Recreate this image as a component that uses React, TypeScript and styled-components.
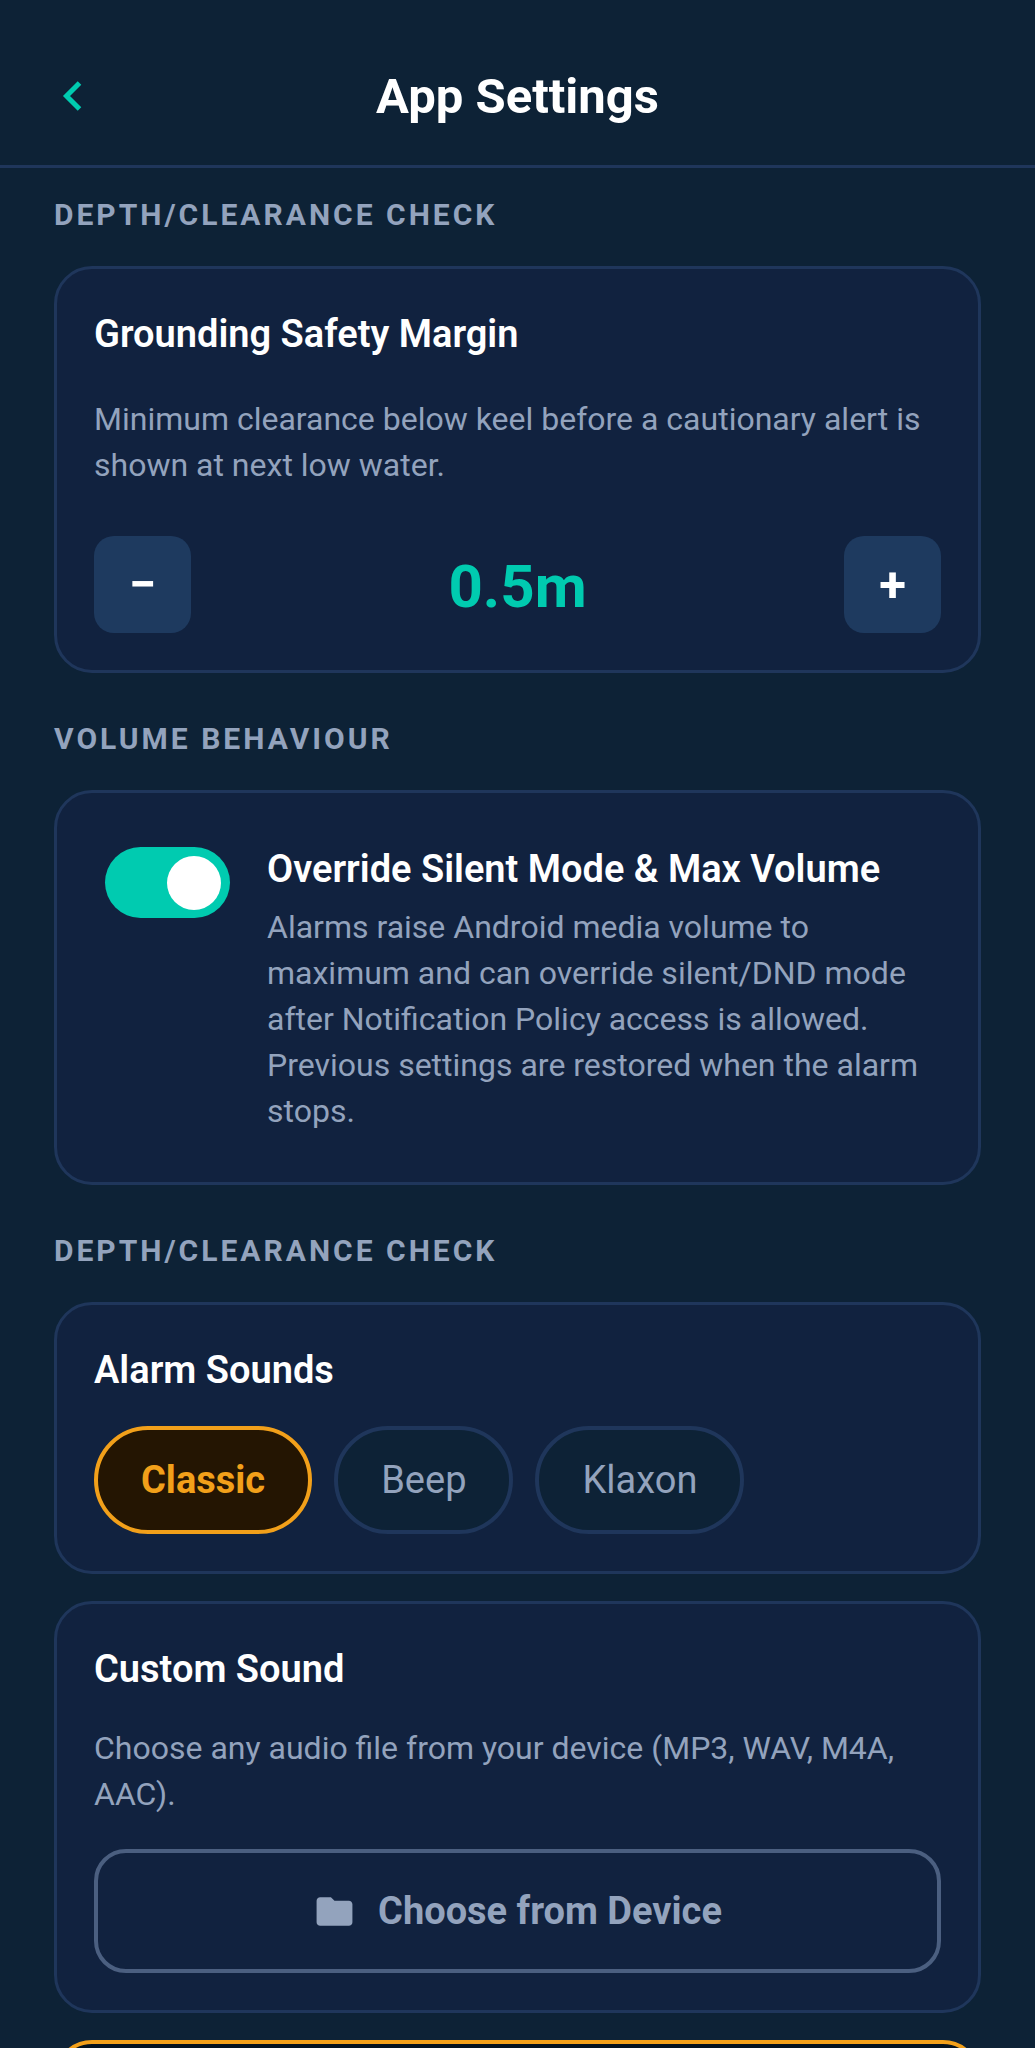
import React, { useState } from 'react';
import styled, { createGlobalStyle } from 'styled-components';

const color = {
  page: '#0d2236',
  card: '#11223f',
  line: '#1f365b',
  control: '#1e3a5f',
  muted: '#93a3bd',
  accent: '#00cbb0',
  amber: '#f2a01a',
};

const GlobalStyle = createGlobalStyle`
  * { box-sizing: border-box; }
  body {
    margin: 0;
    background: ${color.page};
    color: #ffffff;
    font-family: Roboto, 'Noto Sans', sans-serif;
  }
  button { font-family: inherit; cursor: pointer; }
`;

const Screen = styled.div`
  height: 100vh;
  overflow: hidden;
  background: ${color.page};
`;

const Header = styled.header`
  display: grid;
  grid-template-columns: 64px 1fr 64px;
  align-items: start;
  padding: 64px 40px 35px;
  border-bottom: 3px solid ${color.line};
`;

const BackButton = styled.button`
  display: flex;
  align-items: center;
  justify-content: center;
  height: 64px;
  padding: 0;
  border: 0;
  background: none;
  color: ${color.accent};
`;

const PageTitle = styled.h1`
  margin: 0;
  font-size: 49px;
  line-height: 66px;
  font-weight: 700;
  text-align: center;
`;

const Content = styled.main`
  display: flex;
  flex-direction: column;
  gap: 48px;
  padding: 29px 54px 0;
`;

const Section = styled.section`
  display: flex;
  flex-direction: column;
  gap: 27px;
`;

const SectionLabel = styled.h2`
  margin: 0 0 6px;
  color: ${color.muted};
  font-size: 30px;
  line-height: 36px;
  font-weight: 700;
  letter-spacing: 3px;
`;

const Card = styled.div`
  padding: 37px;
  border: 3px solid ${color.line};
  border-radius: 38px;
  background: ${color.card};
`;

const HighlightCard = styled.div`
  height: 240px;
  border: 4px solid ${color.amber};
  border-radius: 38px;
  background: #03121f;
`;

const CardTitle = styled.h3`
  margin: 0;
  font-size: 38px;
  line-height: 56px;
  font-weight: 600;
`;

const Description = styled.p<{ $above: number }>`
  margin: ${(p) => p.$above}px 0 0;
  color: ${color.muted};
  font-size: 32px;
  line-height: 46px;
`;

const Stepper = styled.div`
  display: flex;
  align-items: center;
  justify-content: space-between;
  margin-top: 48px;
`;

const StepButton = styled.button`
  width: 97px;
  height: 97px;
  padding: 0;
  border: 0;
  border-radius: 20px;
  background: ${color.control};
  color: #ffffff;
  font-size: 49px;
  line-height: 56px;
  font-weight: 700;
`;

const StepValue = styled.output`
  padding-top: 5px;
  color: ${color.accent};
  font-size: 60px;
  line-height: 72px;
  font-weight: 700;
`;

const SwitchRow = styled.div`
  display: flex;
  align-items: flex-start;
  gap: 37px;
  padding: 11px;
`;

const Switch = styled.input`
  appearance: none;
  flex: none;
  display: flex;
  align-items: center;
  width: 125px;
  height: 71px;
  margin: 6px 0 0;
  padding: 0 9px;
  border-radius: 36px;
  background: ${color.control};
  cursor: pointer;

  &::before {
    content: '';
    width: 54px;
    height: 54px;
    border-radius: 50%;
    background: #ffffff;
  }

  &:checked {
    justify-content: flex-end;
    background: ${color.accent};
  }
`;

const SwitchText = styled.div`
  flex: 1;
  min-width: 0;
`;

const Pills = styled.div`
  display: flex;
  flex-wrap: wrap;
  gap: 22px;
  margin-top: 28px;
`;

const Pill = styled.button<{ $active: boolean }>`
  height: 108px;
  padding: 0 43px;
  border: 4px solid ${(p) => (p.$active ? color.amber : color.line)};
  border-radius: 54px;
  background: ${(p) => (p.$active ? '#241502' : color.page)};
  color: ${(p) => (p.$active ? color.amber : color.muted)};
  font-size: 38px;
  line-height: 46px;
  font-weight: ${(p) => (p.$active ? 700 : 400)};
`;

const OutlineButton = styled.button`
  display: flex;
  align-items: center;
  justify-content: center;
  gap: 22px;
  width: 100%;
  height: 124px;
  margin-top: 32px;
  padding: 0;
  border: 4px solid #4b5f80;
  border-radius: 32px;
  background: transparent;
  color: ${color.muted};
  font-size: 38px;
  line-height: 46px;
  font-weight: 700;
`;

const sounds = ['Classic', 'Beep', 'Klaxon'];

export default function App() {
  const [margin, setMargin] = useState(5);
  const [override, setOverride] = useState(true);
  const [sound, setSound] = useState('Classic');

  return (
    <>
      <GlobalStyle />
      <Screen>
        <Header>
          <BackButton aria-label="Back">
            <svg width="20" height="30" viewBox="0 0 20 30" fill="none">
              <path d="M17.5 2 4.5 15l13 13" stroke="currentColor" strokeWidth="5" />
            </svg>
          </BackButton>
          <PageTitle>App Settings</PageTitle>
        </Header>
        <Content>
          <Section>
            <SectionLabel>DEPTH/CLEARANCE CHECK</SectionLabel>
            <Card>
              <CardTitle>Grounding Safety Margin</CardTitle>
              <Description $above={34}>
                Minimum clearance below keel before a cautionary alert is shown at next low water.
              </Description>
              <Stepper>
                <StepButton aria-label="Decrease margin" onClick={() => setMargin(Math.max(0, margin - 1))}>
                  −
                </StepButton>
                <StepValue>{(margin / 10).toFixed(1)}m</StepValue>
                <StepButton aria-label="Increase margin" onClick={() => setMargin(margin + 1)}>
                  +
                </StepButton>
              </Stepper>
            </Card>
          </Section>

          <Section>
            <SectionLabel>VOLUME BEHAVIOUR</SectionLabel>
            <Card>
              <SwitchRow>
                <Switch
                  id="override"
                  type="checkbox"
                  role="switch"
                  checked={override}
                  onChange={(e) => setOverride(e.target.checked)}
                />
                <SwitchText>
                  <CardTitle>
                    <label htmlFor="override">Override Silent Mode &amp; Max Volume</label>
                  </CardTitle>
                  <Description $above={7}>
                    Alarms raise Android media volume to maximum and can override silent/DND mode after
                    Notification Policy access is allowed. Previous settings are restored when the alarm
                    stops.
                  </Description>
                </SwitchText>
              </SwitchRow>
            </Card>
          </Section>

          <Section>
            <SectionLabel>DEPTH/CLEARANCE CHECK</SectionLabel>
            <Card>
              <CardTitle>Alarm Sounds</CardTitle>
              <Pills>
                {sounds.map((name) => (
                  <Pill
                    key={name}
                    $active={name === sound}
                    aria-pressed={name === sound}
                    onClick={() => setSound(name)}
                  >
                    {name}
                  </Pill>
                ))}
              </Pills>
            </Card>
            <Card>
              <CardTitle>Custom Sound</CardTitle>
              <Description $above={28}>
                Choose any audio file from your device (MP3, WAV, M4A, AAC).
              </Description>
              <OutlineButton>
                <svg width="43" height="43" viewBox="0 0 24 24" fill="currentColor" aria-hidden="true">
                  <path d="M10 4H4c-1.1 0-2 .9-2 2v12c0 1.1.9 2 2 2h16c1.1 0 2-.9 2-2V8c0-1.1-.9-2-2-2h-8z" />
                </svg>
                Choose from Device
              </OutlineButton>
            </Card>
            <HighlightCard />
          </Section>
        </Content>
      </Screen>
    </>
  );
}
